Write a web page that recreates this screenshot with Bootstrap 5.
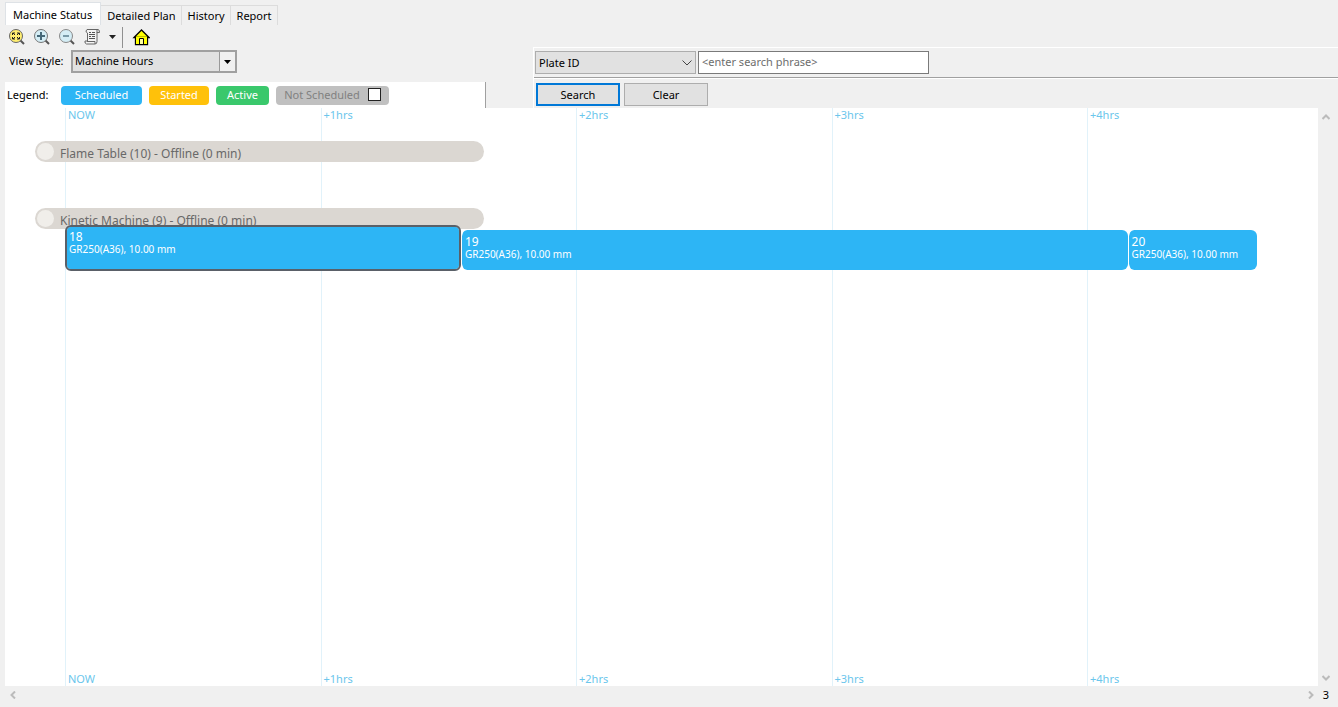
<!DOCTYPE html>
<html lang="en">
<head>
<meta charset="utf-8">
<meta name="viewport" content="width=device-width, initial-scale=1">
<title>Machine Status</title>
<link href="https://cdn.jsdelivr.net/npm/bootstrap@5.3.0/dist/css/bootstrap.min.css" rel="stylesheet">
<style>
body{background:#f0f0f0;color:#000;font-family:"Noto Sans","Open Sans",sans-serif;font-size:11px;line-height:16px}
.nav-tabs{border:0;padding:2px 0 0 5px;height:25px;align-items:flex-start}
.nav-tabs .nav-link{color:#000;border:1px solid #dcdcdc;border-left-width:0;border-bottom:0;border-radius:0;margin:3px 0 0;padding:1px 5px 0 6px;height:20px;line-height:16px;background:#f0f0f0}
.nav-tabs .nav-link.active{margin:0;height:23px;padding:1px 8px 0 7px;border-left-width:1px;background:#fff}
.left-pane{flex:0 0 533px}
.tools{height:24px;padding-left:8px}
.tools button{border:0;background:none;padding:0;display:flex}
.tool{width:18px;margin-right:7px}
.vline{width:1px;height:21px;background:#909090;margin:0 9px 0 5px}
.view-row{height:25px;padding:0 0 1px 9px;gap:6px}
.box-select{position:relative}
.box-select select{appearance:none;background:#e1e1e1;color:#000;border-radius:0;width:100%;height:100%;padding:0 3px;line-height:16px;display:block}
.box-select svg{position:absolute;pointer-events:none}
.view-name{width:56px}
.view-select{width:166px;height:23px}
.view-select select{border:2px solid #a0a0a0;padding:0 2px}
.view-select svg{top:2px;right:2px}
.legend{background:#fff;width:481px;height:26px;margin:8px 0 0 5px;padding-left:2px;border-right:1px solid #a0a0a0;gap:7px}
.legend-name{width:47px}
.key{height:19px;border-radius:4px;color:#fff;display:flex;align-items:center;justify-content:center}
.key-scheduled{background:#2db5f5;width:81px}
.key-started{background:#ffc10a;width:60px}
.key-active{background:#3ac86c;width:53px}
.key-none{background:#c0c0c0;color:#808080;width:113px;gap:8px}
.key-none input{appearance:none;width:13px;height:13px;border:1px solid #222;background:#fff;margin:0 0 2px}
.key-none input:checked{background:#222}
.search-pane{margin-top:47px;border-top:1px solid #fff;border-left:1px solid #fff}
.search-fields{height:30px;padding:3px 0 3px 1px;gap:2px;border-bottom:1px solid #a0a0a0}
.plate-select{width:161px}
.plate-select select{border:1px solid #adadad}
.plate-select svg{right:3px;top:8px}
.phrase{width:231px;height:23px;border:1px solid #7a7a7a;border-radius:0;padding:0 3px 2px;line-height:16px;color:#000}
.phrase::placeholder{color:#6d6d6d;opacity:1}
.search-btns{padding:4px 0 2px 2px;gap:4px;border-top:1px solid #fff}
.push{width:84px;height:23px;padding:0;font-size:11px;line-height:16px;border:1px solid #adadad;border-radius:0;background:#e1e1e1;color:#000}
.push-default{border:2px solid #0078d7}
.chart{background:#fff;position:relative;margin-left:5px}
.scale{position:absolute;inset:0;display:grid;grid-template-columns:60px repeat(4,1fr) .904fr}
.tick{border-left:1px solid #e1f2fa;padding-left:2px;color:#6bc6ec;display:flex;flex-direction:column;justify-content:space-between;line-height:14px}
.machines{position:relative;padding-top:33px}
.machine{min-height:67px}
.machine-bar{width:449px;height:21px;margin-left:30px;border-radius:11px;background:#dbd7d2;color:#696969;display:flex;align-items:center;font-size:12px;padding-top:4px}
.lamp{width:17px;height:17px;border-radius:50%;background:#f0eeea;margin:-4px 6px 0 2px}
.jobs{display:flex;align-items:flex-end;margin:-4px 0 0 60px}
.job{padding:5px 3px 0;height:40px;border:0;border-radius:6px;background:#2db5f5;background-clip:padding-box;color:#fff;text-align:left;display:flex;flex-direction:column;font-size:12px;line-height:13px}
.job + .job{border-left:1px solid #fff}
.job.selected{height:46px;margin-bottom:-1px;padding:3px 2px 0;border:2px solid #5a6068}
.job small{font-size:10px;line-height:12px}
.vbar{width:20px;padding:5px 0 4px 4px}
.hbar{height:21px;padding:0 9px 4px 9px}
.arrow{border:0;background:none;padding:0;display:flex}
</style>
</head>
<body class="vh-100 d-flex flex-column overflow-hidden">
<header class="d-flex">
  <div class="left-pane">
    <nav class="nav nav-tabs flex-nowrap">
      <button class="nav-link active">Machine Status</button>
      <button class="nav-link">Detailed Plan</button>
      <button class="nav-link">History</button>
      <button class="nav-link">Report</button>
    </nav>
    <div class="tools d-flex align-items-center">
      <button class="tool" aria-label="Zoom to fit"><svg width="18" height="18"><path d="M12 12l4 4" stroke="#555" stroke-width="2"/><circle cx="8" cy="8" r="6.5" fill="#ffee70" stroke="#666"/><path d="M4.500 7V5H7M9 5h2.500v2M4.500 9v2H7M9 11h2.500V9M5 5l2 2M11 5L9 7M5 11l2-2M11 11L9 9" fill="none" stroke="#222"/></svg></button>
      <button class="tool" aria-label="Zoom in"><svg width="18" height="18"><path d="M12 12l4 4" stroke="#555" stroke-width="2"/><circle cx="8" cy="8" r="6.500" fill="#d4edf5" stroke="#777"/><path d="M4 8h8M8 4v8" stroke="#456878" stroke-width="2"/></svg></button>
      <button class="tool" aria-label="Zoom out"><svg width="18" height="18"><path d="M12 12l4 4" stroke="#555" stroke-width="2"/><circle cx="8" cy="8" r="6.500" fill="#d4edf5" stroke="#888"/><path d="M5 8h6" stroke="#789aa8" stroke-width="2"/></svg></button>
      <button aria-label="Print" class="me-2"><svg width="17" height="18"><path d="M4 1.500h11q1.500 0 1.500 3h-2.500v9q0 2.500-2 2.500H3.500q-2-.5-1.500-3h2.500V5Q3 4.500 3 3z" fill="#f4f4f4" stroke="#666"/><path d="M4 13.500h8v2.500M14 2v3" fill="none" stroke="#666"/><path d="M6 4.500h2M9 4.500h3M6 6.500h6M6 8.500h2M9 8.500h3M6 10.500h6" stroke="#555"/></svg></button>
      <button aria-label="Print options"><svg width="9" height="6"><path d="M1 1h7L4.500 5z" fill="#222"/></svg></button>
      <span class="vline"></span>
      <button aria-label="Home"><svg width="18" height="18"><path d="M3.500 9v7.500h12V9M2 9.500L9.500 2 17 9.500z" fill="#ff0" stroke="#000" stroke-width="1.300"/><path d="M4 9h11v7H4z" fill="#ff0"/><path d="M7.500 16v-5.500h4V16" fill="#ffffa0" stroke="#000"/></svg></button>
    </div>
    <div class="view-row d-flex align-items-center">
      <label for="view" class="view-name text-nowrap">View Style:</label>
      <div class="box-select view-select"><select id="view"><option>Machine Hours</option><option>Plates</option></select><svg width="16" height="19"><path d="M0 0h16v19H0z" fill="#f0f0f0"/><path d="M.5 0v19" stroke="#999"/><path d="M5 8h7l-3.500 4z" fill="#000"/></svg></div>
    </div>
    <div class="legend d-flex align-items-center">
      <span class="legend-name">Legend:</span>
      <span class="key key-scheduled">Scheduled</span>
      <span class="key key-started">Started</span>
      <span class="key key-active">Active</span>
      <label class="key key-none">Not Scheduled <input type="checkbox"></label>
    </div>
  </div>
  <div class="search-pane flex-grow-1">
    <div class="search-fields d-flex">
      <div class="box-select plate-select"><select aria-label="Search field"><option>Plate ID</option><option>Nest</option></select><svg width="12" height="8"><path d="M1.500 1.500L6 6l4.500-4.500" fill="none" stroke="#444"/></svg></div>
      <input class="phrase" type="text" placeholder="&lt;enter search phrase&gt;" aria-label="Search phrase">
    </div>
    <div class="search-btns d-flex">
      <button class="btn push push-default">Search</button>
      <button class="btn push">Clear</button>
    </div>
  </div>
</header>
<div class="d-flex flex-grow-1">
  <main class="chart flex-grow-1">
    <div class="scale">
      <span></span>
      <div class="tick"><span>NOW</span><span>NOW</span></div>
      <div class="tick"><span>+1hrs</span><span>+1hrs</span></div>
      <div class="tick"><span>+2hrs</span><span>+2hrs</span></div>
      <div class="tick"><span>+3hrs</span><span>+3hrs</span></div>
      <div class="tick"><span>+4hrs</span><span>+4hrs</span></div>
    </div>
    <div class="machines">
      <section class="machine"><div class="machine-bar"><i class="lamp"></i>Flame Table (10) - Offline (0 min)</div></section>
      <section class="machine">
        <div class="machine-bar"><i class="lamp"></i>Kinetic Machine (9) - Offline (0 min)</div>
        <div class="jobs">
          <button class="job selected" style="width:31.6%">18<small>GR250(A36), 10.00 mm</small></button>
          <button class="job" style="width:53.2%">19<small>GR250(A36), 10.00 mm</small></button>
          <button class="job" style="width:10.3%">20<small>GR250(A36), 10.00 mm</small></button>
        </div>
      </section>
    </div>
  </main>
  <div class="vbar d-flex flex-column justify-content-between">
    <button class="arrow" aria-label="Scroll up"><svg width="8" height="8"><path d="M.5 6L4 2.500 7.500 6" fill="none" stroke="#bbb" stroke-width="2"/></svg></button>
    <button class="arrow" aria-label="Scroll down"><svg width="8" height="8"><path d="M.5 2L4 5.500 7.500 2" fill="none" stroke="#bbb" stroke-width="2"/></svg></button>
  </div>
</div>
<footer class="hbar d-flex align-items-center">
  <button class="arrow me-auto" aria-label="Scroll left"><svg width="8" height="8"><path d="M6 .5L2.500 4 6 7.500" fill="none" stroke="#bbb" stroke-width="2"/></svg></button>
  <button class="arrow me-2" aria-label="Scroll right"><svg width="8" height="8"><path d="M2 .5L5.500 4 2 7.500" fill="none" stroke="#bbb" stroke-width="2"/></svg></button>
  <span>3</span>
</footer>
<script src="https://cdn.jsdelivr.net/npm/bootstrap@5.3.0/dist/js/bootstrap.bundle.min.js"></script>
</body>
</html>
